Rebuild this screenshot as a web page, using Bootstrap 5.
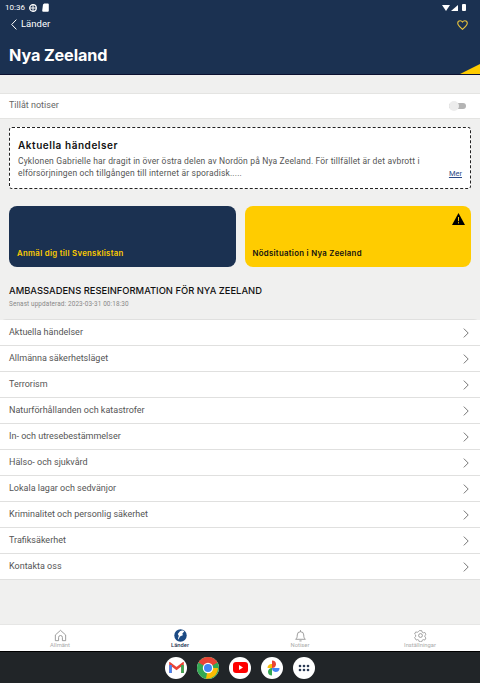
<!DOCTYPE html>
<html lang="sv">
<head>
    <meta charset="UTF-8">
    <meta name="viewport" content="width=device-width, initial-scale=1.0">
    <title>Nya Zeeland</title>
    <link href="https://cdn.jsdelivr.net/npm/bootstrap@5.3.0/dist/css/bootstrap.min.css" rel="stylesheet">
    <style>
        html, body { height: 100%; }
        body {
            width: 480px;
            height: 683px;
            overflow: hidden;
            background: #f0f0ef;
            font-family: Roboto, "Liberation Sans", sans-serif;
            display: flex;
            flex-direction: column;
        }
        .app-head {
            height: 75px;
            background: #1b3151;
            border-bottom: 1px solid #0b1030;
            color: #fff;
            position: relative;
            flex: none;
        }
        .app-head::after {
            content: '';
            position: absolute;
            right: 0;
            bottom: 0;
            border-style: solid;
            border-width: 0 0 10px 20px;
            border-color: transparent transparent #fc0 transparent;
        }
        .status-row { height: 15px; padding: 0 14px 0 5px; font-size: 8px; line-height: 15px; }
        .back-row { height: 19px; padding: 0 12px 0 11px; font-size: 9.5px; }
        .page-name {
            font-family: Inter, sans-serif;
            font-weight: 700;
            font-size: 16.2px;
            line-height: 20px;
            margin: 11px 0 0 9px;
            letter-spacing: -.1px;
        }
        .notify-row {
            height: 26px;
            margin-top: 18px;
            padding: 0 14px 0 9px;
            background: #fff;
            border-top: 1px solid #e4e4e2;
            border-bottom: 1px solid #e4e4e2;
            font-size: 9px;
            color: #666;
            flex: none;
        }
        .toggle-track { width: 17px; height: 6px; border-radius: 3px; background: #b4b4b4; position: relative; }
        .toggle-track::before {
            content: '';
            position: absolute;
            left: 0;
            top: -2px;
            width: 10px;
            height: 10px;
            border-radius: 50%;
            background: #ececec;
        }
        .news-box {
            margin: 8px 9px 0;
            height: 62px;
            padding: 10px 8px 0 8px;
            background: #fff;
            border: 1px dashed #222;
            border-radius: 3px;
            position: relative;
            flex: none;
        }
        .news-title { font-family: Inter, sans-serif; font-size: 10px; font-weight: 600; line-height: 14px; color: #111; margin-bottom: 4px; letter-spacing: .55px; }
        .news-text { font-size: 8.5px; line-height: 11.5px; color: #555; margin: 0; width: 415px; letter-spacing: .16px; }
        .more-link { position: absolute; right: 8px; bottom: 9px; font-size: 7.5px; line-height: 10px; color: #2b4a86; }
        .tile-row { margin: 17px 9px 0; gap: 9px; height: 61px; flex: none; }
        .tile {
            flex: 1 1 0;
            border-radius: 8px;
            padding: 0 8px 8px;
            font-family: Inter, sans-serif;
            font-size: 7.8px;
            font-weight: 600;
            line-height: 11px;
            letter-spacing: .3px;
            position: relative;
        }
        .tile-navy { background: #1b3151; color: #fc0; }
        .tile-yellow { background: #fc0; color: #111; }
        .warn-icon { position: absolute; right: 6px; top: 7px; }
        .info-title { margin: 17px 9px 0; font-family: Inter, sans-serif; font-size: 9.4px; line-height: 13px; font-weight: 500; color: #111; }
        .info-date { margin: 3px 9px 0; font-size: 6.4px; line-height: 9px; color: #888; letter-spacing: .12px; }
        .topic-list { margin-top: 10px; border-top: 1px solid #e0e0df; flex: none; }
        .topic-list .list-group-item {
            height: 26px;
            padding: 0 11px 0 9px;
            border-width: 0 0 1px;
            border-color: #e0e0df;
            border-radius: 0;
            font-size: 9px;
            color: #555;
        }
        .tab-bar { margin-top: auto; height: 27px; background: #fff; border-top: 1px solid #e6e6e5; flex: none; }
        .tab-item { flex: 1 1 0; font-size: 5.8px; line-height: 7px; color: #aaa; padding-top: 2px; }
        .tab-on { color: #1b3151; font-weight: 500; }
        .dock {
            height: 32px;
            background: #212528;
            border-top: 1px solid #000;
            gap: 10px;
            flex: none;
        }
        .dock-icon { width: 22px; height: 22px; border-radius: 50%; background: #fff; }
        .status-gap { margin-left: 5px; }
        .signal-gap { margin-left: -3px; }
    </style>
</head>
<body>
    <header class="app-head">
        <div class="status-row d-flex align-items-center justify-content-between">
            <div class="d-flex align-items-center">
                <span>10:36</span>
                <svg class="ms-1" width="8" height="8" viewBox="0 0 8 8"><circle cx="4" cy="4" r="3.3" fill="none" stroke="#fff" stroke-width="1.2"/><path d="M0.5 4h7M4 .5v7" stroke="#fff" stroke-width="1"/></svg>
                <svg class="status-gap" width="7" height="9" viewBox="0 0 7 9"><path d="M1 1.500 2.200.4h3.600a1 1 0 0 1 1 1v6.400a1 1 0 0 1-1 1H1.200a1 1 0 0 1-1-1z" fill="#fff"/></svg>
            </div>
            <div class="d-flex align-items-center gap-1">
                <svg width="8" height="6" viewBox="0 0 8 6"><path d="M0 0h8L4 6z" fill="#fff"/></svg>
                <svg class="signal-gap" width="7" height="6" viewBox="0 0 7 6"><path d="M7 0v6H0z" fill="#fff"/></svg>
                <svg width="4" height="7" viewBox="0 0 4 7"><rect width="4" height="7" rx="1" fill="#fff"/></svg>
            </div>
        </div>
        <div class="back-row d-flex align-items-center justify-content-between">
            <div class="d-flex align-items-center gap-1">
                <svg width="6" height="11" viewBox="0 0 6 11"><path d="M5.400.6.700 5.500l4.700 4.900" fill="none" stroke="#fff" stroke-width="1"/></svg>
                <span>Länder</span>
            </div>
            <svg width="11" height="10" viewBox="0 0 24 22"><path d="M12 20.500C5 14.500 1.500 11.300 1.500 7.200 1.500 4 4 1.700 7 1.700c2 0 3.900 1 5 2.800 1.100-1.800 3-2.800 5-2.800 3 0 5.500 2.300 5.500 5.500 0 4.100-3.500 7.300-10.500 13.300z" fill="none" stroke="#e9c33c" stroke-width="2.400"/></svg>
        </div>
        <h1 class="page-name">Nya Zeeland</h1>
    </header>

    <div class="notify-row d-flex align-items-center justify-content-between">
        <span>Tillåt notiser</span>
        <div class="toggle-track"></div>
    </div>

    <section class="news-box">
        <div class="news-title">Aktuella händelser</div>
        <p class="news-text">Cyklonen Gabrielle har dragit in över östra delen av Nordön på Nya Zeeland. För tillfället är det avbrott i elförsörjningen och tillgången till internet är sporadisk.....</p>
        <a class="more-link" href="#">Mer</a>
    </section>

    <div class="tile-row d-flex">
        <div class="tile tile-navy d-flex align-items-end">Anmäl dig till Svensklistan</div>
        <div class="tile tile-yellow d-flex align-items-end">
            Nödsituation i Nya Zeeland
            <svg class="warn-icon" width="13" height="12" viewBox="0 0 13 12"><path d="M6.500 0 13 12H0z" fill="#000"/><path d="M6.500 4v4.200M6.500 9.200v1.200" stroke="#fc0" stroke-width="1"/></svg>
        </div>
    </div>

    <div class="info-title">AMBASSADENS RESEINFORMATION FÖR NYA ZEELAND</div>
    <div class="info-date">Senast uppdaterad: 2023-03-31 00:18:30</div>

    <div class="list-group topic-list" id="topics"></div>

    <nav class="tab-bar d-flex">
        <div class="tab-item d-flex flex-column align-items-center justify-content-center">
            <svg width="13" height="13" viewBox="0 0 24 24"><path d="M2.500 11 12 2.500 21.500 11v10.500h-6v-6a3.500 3.500 0 0 0-7 0v6h-6z" fill="none" stroke="#888" stroke-width="1.500"/></svg>
            <span>Allmänt</span>
        </div>
        <div class="tab-item tab-on d-flex flex-column align-items-center justify-content-center">
            <svg width="13" height="13" viewBox="0 0 24 24"><circle cx="12" cy="12" r="11.500" fill="#1b4a84"/><path d="M11 4c3-2 7-1 8 0l-4 5 2 2-6 3-3 6c-1-3 0-5 1-7L7 9z" fill="#fff"/></svg>
            <span>Länder</span>
        </div>
        <div class="tab-item d-flex flex-column align-items-center justify-content-center">
            <svg width="13" height="13" viewBox="0 0 24 24"><path d="M3 19c2-2 3-3 3-8a6 6 0 0 1 12 0c0 5 1 6 3 8zM10 22h4M12 2v3" fill="none" stroke="#888" stroke-width="1.500"/></svg>
            <span>Notiser</span>
        </div>
        <div class="tab-item d-flex flex-column align-items-center justify-content-center">
            <svg width="13" height="13" viewBox="0 0 24 24"><path d="M9.500 2h5l.7 3 2.600 1.500 3-.9 2.400 4.300-2.200 2.100v3l2.200 2.100-2.400 4.300-3-.9-2.600 1.500-.7 3h-5l-.7-3-2.600-1.500-3 .9L-.1 16.100l2.200-2.100v-3L-.1 8.900l2.400-4.300 3 .9 2.600-1.500z" transform="translate(1.200 1.200) scale(.9)" fill="none" stroke="#888" stroke-width="1.500"/><circle cx="12" cy="12" r="3.500" fill="none" stroke="#888" stroke-width="1.500"/></svg>
            <span>Inställningar</span>
        </div>
    </nav>

    <div class="dock d-flex align-items-center justify-content-center">
        <div class="dock-icon d-flex align-items-center justify-content-center">
            <svg width="15" height="12" viewBox="0 0 15 12"><path d="M1.500 11V2l6 4.500 6-4.500v9" fill="none" stroke="#ea4335" stroke-width="2.600"/><path d="M1.500 11V3" stroke="#4285f4" stroke-width="2.600"/><path d="M13.500 11V3" stroke="#34a853" stroke-width="2.600"/></svg>
        </div>
        <div class="dock-icon d-flex align-items-center justify-content-center">
            <svg width="22" height="22" viewBox="0 0 22 22"><circle cx="11" cy="11" r="11" fill="#34a853"/><path d="M11 11 1.500 5.500A11 11 0 0 1 20.500 5.500z" fill="#ea4335"/><path d="M11 11h10A11 11 0 0 1 9 21.800z" fill="#fbbc04"/><circle cx="11" cy="11" r="5.200" fill="#fff"/><circle cx="11" cy="11" r="4" fill="#4285f4"/></svg>
        </div>
        <div class="dock-icon d-flex align-items-center justify-content-center">
            <svg width="15" height="11" viewBox="0 0 15 11"><rect width="15" height="11" rx="3" fill="#f00"/><path d="M6 3v5l4-2.500z" fill="#fff"/></svg>
        </div>
        <div class="dock-icon d-flex align-items-center justify-content-center">
            <svg width="16" height="16" viewBox="0 0 16 16"><path d="M8 8H3.500a4 4 0 0 1 4.500-4z" fill="#fbbc04"/><path d="M8 8V.5a4 4 0 0 1 4 4 4 4 0 0 1-4 3.500z" fill="#ea4335"/><path d="M8 8h7.500a4 4 0 0 1-4 4A4 4 0 0 1 8 8z" fill="#4285f4"/><path d="M8 8v7.500a4 4 0 0 1-4-4A4 4 0 0 1 8 8z" fill="#34a853"/></svg>
        </div>
        <div class="dock-icon d-flex align-items-center justify-content-center">
            <svg width="12" height="8" viewBox="0 0 12 8"><g fill="#2b3a55"><circle cx="2" cy="2" r="1.300"/><circle cx="6" cy="2" r="1.300"/><circle cx="10" cy="2" r="1.300"/><circle cx="2" cy="6" r="1.300"/><circle cx="6" cy="6" r="1.300"/><circle cx="10" cy="6" r="1.300"/></g></svg>
        </div>
    </div>

    <script src="https://cdn.jsdelivr.net/npm/bootstrap@5.3.0/dist/js/bootstrap.bundle.min.js"></script>
    <script>
        const topics = ['Aktuella händelser', 'Allmänna säkerhetsläget', 'Terrorism', 'Naturförhållanden och katastrofer',
            'In- och utresebestämmelser', 'Hälso- och sjukvård', 'Lokala lagar och sedvänjor',
            'Kriminalitet och personlig säkerhet', 'Trafiksäkerhet', 'Kontakta oss'];
        const chevron = '<svg width="6" height="10" viewBox="0 0 6 10"><path d="M.8.6 5.200 5 .8 9.400" fill="none" stroke="#777" stroke-width="1"/></svg>';
        document.getElementById('topics').innerHTML = topics.map(t =>
            `<div class="list-group-item d-flex align-items-center justify-content-between"><span>${t}</span>${chevron}</div>`
        ).join('');
    </script>
</body>
</html>
